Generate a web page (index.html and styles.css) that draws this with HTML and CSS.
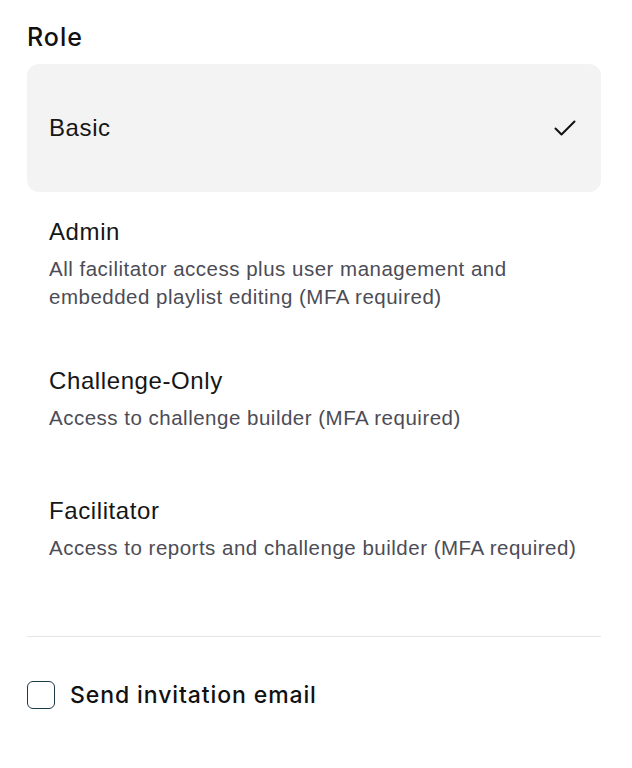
FILE: index.html
```html
<!DOCTYPE html>
<html lang="en">
<head>
    <meta charset="UTF-8">
    <meta name="viewport" content="width=device-width, initial-scale=1.0">
    <title>Role</title>
    <link rel="stylesheet" href="styles.css">
</head>
<body>
    <main class="panel">
        <h2 class="section-title">Role</h2>
        <div class="role-list">
            <div class="role-option selected">
                <div class="role-text">
                    <div class="role-name">Basic</div>
                </div>
                <svg class="check" width="24" height="24" viewBox="0 0 24 24" fill="none" stroke="#111" stroke-width="2" stroke-linecap="round" stroke-linejoin="round">
                    <polyline points="2.5 12.5 8.5 18.5 21.5 5.5"/>
                </svg>
            </div>
            <div class="role-option">
                <div class="role-text">
                    <div class="role-name">Admin</div>
                    <div class="role-desc">All facilitator access plus user management and embedded playlist editing (MFA required)</div>
                </div>
            </div>
            <div class="role-option">
                <div class="role-text">
                    <div class="role-name">Challenge-Only</div>
                    <div class="role-desc">Access to challenge builder (MFA required)</div>
                </div>
            </div>
            <div class="role-option">
                <div class="role-text">
                    <div class="role-name">Facilitator</div>
                    <div class="role-desc">Access to reports and challenge builder (MFA required)</div>
                </div>
            </div>
        </div>
        <hr class="divider">
        <label class="invite">
            <span class="box"></span>
            <span class="invite-label">Send invitation email</span>
        </label>
    </main>
</body>
</html>
```

FILE: styles.css
```css
body {
    margin: 0;
    padding: 0;
    background-color: #ffffff;
    font-family: "Liberation Sans", Arial, sans-serif;
    color: #1a1a1a;
}
.panel {
    width: 574px;
    padding: 22px 31px 0 27px;
}
.section-title {
    font-family: Inter, "Noto Sans", sans-serif;
    font-size: 25px;
    font-weight: 500;
    letter-spacing: 1px;
    line-height: 30px;
    margin: 0 0 12px 0;
    color: #111111;
}
.role-list {
    display: flex;
    flex-direction: column;
    margin-bottom: 35px;
}
.role-option {
    display: flex;
    align-items: flex-start;
    justify-content: space-between;
    box-sizing: border-box;
    min-height: 130px;
    padding: 26px 22px 30px 22px;
}
.role-option.selected {
    min-height: 128px;
    height: 128px;
    padding: 0 24px 0 22px;
    align-items: center;
    background-color: #f3f3f3;
    border-radius: 12px;
}
.role-name {
    font-size: 24px;
    letter-spacing: 0.6px;
    line-height: 28px;
    color: #161616;
}
.role-desc {
    margin-top: 9px;
    font-size: 20.5px;
    letter-spacing: 0.5px;
    line-height: 28px;
    color: #4c4c56;
}
.check {
    display: block;
}
.divider {
    border: none;
    border-top: 1px solid #e5e5e5;
    margin: 0;
}
.invite {
    display: flex;
    align-items: center;
    gap: 15px;
    margin-top: 44px;
}
.box {
    box-sizing: border-box;
    width: 28px;
    height: 28px;
    border: 1.5px solid #1c3a4a;
    border-radius: 6px;
}
.invite-label {
    font-family: Inter, "Noto Sans", sans-serif;
    font-size: 23px;
    font-weight: 500;
    letter-spacing: 0.9px;
    color: #111111;
}
```
